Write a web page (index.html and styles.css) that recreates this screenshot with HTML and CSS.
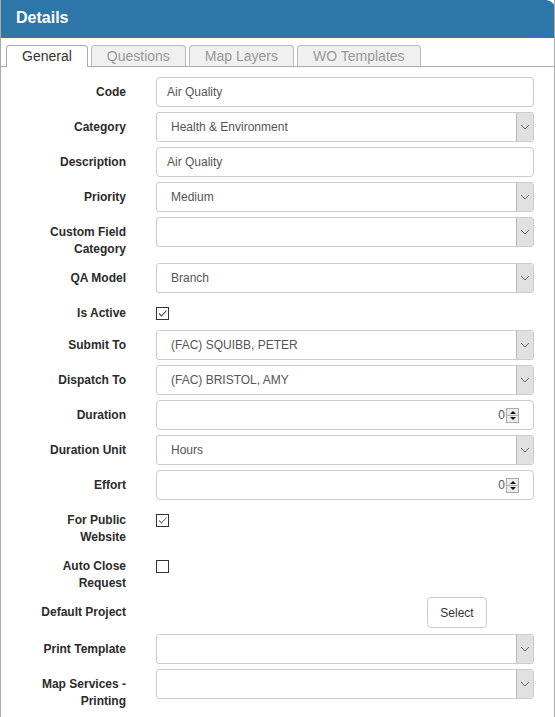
FILE: index.html
```html
<!DOCTYPE html>
<html>
<head>
<meta charset="utf-8">
<link rel="stylesheet" href="styles.css">
</head>
<body>
<div class="panel">
  <div class="panel-head">Details</div>
  <div class="tabs">
    <div class="tab active">General</div>
    <div class="tab">Questions</div>
    <div class="tab">Map Layers</div>
    <div class="tab">WO Templates</div>
  </div>
  <div class="form">
    <div class="lbl">Code</div>
    <div class="field"><div class="input">Air Quality</div></div>

    <div class="lbl">Category</div>
    <div class="field"><div class="select"><span class="val">Health &amp; Environment</span><span class="arrow"><svg width="10" height="6" viewBox="0 0 10 6"><polyline points="1,1 5,5 9,1" fill="none" stroke="#666" stroke-width="1"/></svg></span></div></div>

    <div class="lbl">Description</div>
    <div class="field"><div class="input">Air Quality</div></div>

    <div class="lbl">Priority</div>
    <div class="field"><div class="select"><span class="val">Medium</span><span class="arrow"><svg width="10" height="6" viewBox="0 0 10 6"><polyline points="1,1 5,5 9,1" fill="none" stroke="#666" stroke-width="1"/></svg></span></div></div>

    <div class="lbl">Custom Field Category</div>
    <div class="field"><div class="select"><span class="val"></span><span class="arrow"><svg width="10" height="6" viewBox="0 0 10 6"><polyline points="1,1 5,5 9,1" fill="none" stroke="#666" stroke-width="1"/></svg></span></div></div>

    <div class="lbl">QA Model</div>
    <div class="field"><div class="select"><span class="val">Branch</span><span class="arrow"><svg width="10" height="6" viewBox="0 0 10 6"><polyline points="1,1 5,5 9,1" fill="none" stroke="#666" stroke-width="1"/></svg></span></div></div>

    <div class="lbl">Is Active</div>
    <div class="field check-cell"><span class="cb"><svg width="11" height="11" viewBox="0 0 11 11"><polyline points="2,5.5 4.5,8 9.5,2.5" fill="none" stroke="#444" stroke-width="1.1"/></svg></span></div>

    <div class="lbl">Submit To</div>
    <div class="field"><div class="select"><span class="val">(FAC) SQUIBB, PETER</span><span class="arrow"><svg width="10" height="6" viewBox="0 0 10 6"><polyline points="1,1 5,5 9,1" fill="none" stroke="#666" stroke-width="1"/></svg></span></div></div>

    <div class="lbl">Dispatch To</div>
    <div class="field"><div class="select"><span class="val">(FAC) BRISTOL, AMY</span><span class="arrow"><svg width="10" height="6" viewBox="0 0 10 6"><polyline points="1,1 5,5 9,1" fill="none" stroke="#666" stroke-width="1"/></svg></span></div></div>

    <div class="lbl">Duration</div>
    <div class="field"><div class="input num"><span class="numval">0</span><span class="spin"><span class="up"></span><span class="down"></span></span></div></div>

    <div class="lbl">Duration Unit</div>
    <div class="field"><div class="select"><span class="val">Hours</span><span class="arrow"><svg width="10" height="6" viewBox="0 0 10 6"><polyline points="1,1 5,5 9,1" fill="none" stroke="#666" stroke-width="1"/></svg></span></div></div>

    <div class="lbl">Effort</div>
    <div class="field"><div class="input num"><span class="numval">0</span><span class="spin"><span class="up"></span><span class="down"></span></span></div></div>

    <div class="lbl">For Public Website</div>
    <div class="field check-cell"><span class="cb"><svg width="11" height="11" viewBox="0 0 11 11"><polyline points="2,5.5 4.5,8 9.5,2.5" fill="none" stroke="#777" stroke-width="1.1"/></svg></span></div>

    <div class="lbl">Auto Close Request</div>
    <div class="field check-cell"><span class="cb"></span></div>

    <div class="lbl">Default Project</div>
    <div class="field btn-cell"><button class="btn">Select</button></div>

    <div class="lbl">Print Template</div>
    <div class="field"><div class="select"><span class="val"></span><span class="arrow"><svg width="10" height="6" viewBox="0 0 10 6"><polyline points="1,1 5,5 9,1" fill="none" stroke="#666" stroke-width="1"/></svg></span></div></div>

    <div class="lbl">Map Services - Printing</div>
    <div class="field"><div class="select"><span class="val"></span><span class="arrow"><svg width="10" height="6" viewBox="0 0 10 6"><polyline points="1,1 5,5 9,1" fill="none" stroke="#666" stroke-width="1"/></svg></span></div></div>
  </div>
</div>
</body>
</html>
```
FILE: styles.css
```css
html, body {
  margin: 0;
  padding: 0;
  background: #fff;
}
body {
  font-family: "Liberation Sans", Arial, sans-serif;
  color: #333;
}
.panel {
  width: 555px;
  height: 717px;
  box-sizing: border-box;
  border-left: 1px solid #aaa;
  border-right: 1px solid #aaa;
  overflow: hidden;
}
.panel-head {
  height: 38px;
  margin: 0 -1px;
  background: #2e75a8;
  color: #fff;
  font-weight: bold;
  font-size: 16px;
  line-height: 35px;
  padding-left: 16px;
  border-top-right-radius: 9px;
}
.tabs {
  display: flex;
  margin-top: 7px;
  padding-left: 5px;
  border-bottom: 1px solid #aaa;
  height: 21px;
}
.tab {
  height: 21px;
  box-sizing: border-box;
  padding: 0 15px;
  margin-right: 3px;
  border: 1px solid #bbb;
  border-bottom: none;
  border-radius: 4px 4px 0 0;
  background: #f0f0f0;
  color: #999;
  font-size: 14px;
  line-height: 20px;
}
.tab.active {
  background: #fff;
  color: #333;
  height: 22px;
  border-color: #aaa;
  padding: 0 15px;
}
.form {
  display: grid;
  grid-template-columns: 96px 378px;
  column-gap: 30px;
  row-gap: 5px;
  padding-left: 29px;
  margin-top: 10px;
}
.lbl {
  text-align: right;
  font-weight: bold;
  font-size: 12px;
  line-height: 17px;
  padding-top: 7px;
  color: #2b2b2b;
}
.field {
  min-height: 30px;
}
.input, .select {
  height: 30px;
  box-sizing: border-box;
  border: 1px solid #ccc;
  border-radius: 4px;
  background: #fff;
  font-size: 12px;
  color: #555;
  line-height: 28px;
}
.input {
  padding-left: 10px;
}
.select {
  display: flex;
  justify-content: space-between;
  padding-left: 14px;
  border-radius: 3px;
}
.arrow {
  width: 17px;
  height: 28px;
  box-sizing: border-box;
  background: #e1e1e1;
  border-left: 1px solid #b8b8b8;
  display: flex;
  align-items: center;
  justify-content: center;
}
.num {
  display: flex;
  justify-content: flex-end;
  align-items: center;
  padding-right: 14px;
}
.numval {
  color: #555;
  margin-right: 1px;
}
.spin {
  width: 13px;
  height: 15px;
  box-sizing: border-box;
  border: 1px solid #aaa;
  background: #ececec;
  display: flex;
  flex-direction: column;
}
.spin .up, .spin .down {
  flex: 1;
  position: relative;
}
.spin .up {
  border-bottom: 1px solid #aaa;
}
.spin .up::after, .spin .down::after {
  content: "";
  position: absolute;
  left: 3px;
  top: 2px;
  width: 0;
  height: 0;
  border-left: 3px solid transparent;
  border-right: 3px solid transparent;
}
.spin .up::after {
  border-bottom: 3px solid #111;
}
.spin .down::after {
  top: 1px;
  border-top: 3px solid #111;
}
.check-cell {
  min-height: 27px;
}
.cb {
  display: block;
  width: 13px;
  height: 13px;
  box-sizing: border-box;
  border: 1px solid #333;
  margin-top: 9px;
  background: #fff;
}
.cb svg {
  display: block;
}
.btn-cell {
  min-height: 32px;
  display: flex;
  justify-content: flex-end;
  align-items: flex-start;
  padding-right: 47px;
}
.btn {
  width: 60px;
  height: 31px;
  border: 1px solid #ccc;
  border-radius: 4px;
  background: #fff;
  font-family: "Liberation Sans", Arial, sans-serif;
  font-size: 12px;
  color: #333;
  padding: 0;
}
```
